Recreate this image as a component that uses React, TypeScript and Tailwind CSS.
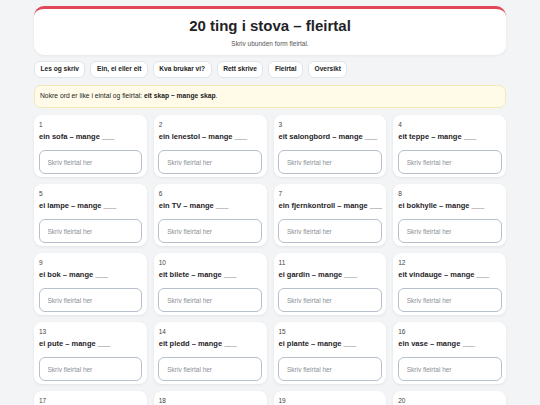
import React from 'react';

const tabs = ['Les og skriv', 'Ein, ei eller eit', 'Kva brukar vi?', 'Rett skrive', 'Fleirtal', 'Oversikt'];

const items = [
  'ein sofa',
  'ein lenestol',
  'eit salongbord',
  'eit teppe',
  'ei lampe',
  'ein TV',
  'ein fjernkontroll',
  'ei bokhylle',
  'ei bok',
  'eit bilete',
  'ei gardin',
  'eit vindauge',
  'ei pute',
  'eit pledd',
  'ei plante',
  'ein vase',
  'eit bord',
  'ein stol',
  'ei klokke',
  'eit speil',
];

export default function App() {
  return (
    <div className="min-h-screen bg-[#f2f4f6] font-['Liberation_Sans',Arial,sans-serif] text-[#1f2328]">
      <div className="mx-auto flex w-[472px] flex-col gap-[6px] pt-[6px] pb-[10px]">
        {/* Header */}
        <div className="rounded-[10px] border-t-[3px] border-[#e04858] bg-white px-4 pt-[8px] pb-[7px] text-center shadow-[0_1px_3px_rgba(0,0,0,0.06)]">
          <h1 className="text-[15px] leading-[18px] font-bold">20 ting i stova – fleirtal</h1>
          <p className="mt-[4px] text-[6.5px] leading-[9px] text-[#555]">Skriv ubunden form fleirtal.</p>
        </div>

        {/* Tabs */}
        <div className="flex gap-[5px]">
          {tabs.map((t) => (
            <button
              key={t}
              className="h-[17px] rounded-[6px] border border-[#dfe5ec] bg-white px-[5.5px] text-[6.6px] leading-none font-bold text-[#222]"
            >
              {t}
            </button>
          ))}
        </div>

        {/* Info */}
        <div className="mt-[1px] flex h-[23px] items-center rounded-[7px] border border-[#f3e8b8] bg-[#fffbe8] px-[5px] text-[6.75px] text-[#222]">
          <span>
            Nokre ord er like i eintal og fleirtal: <strong>eit skap – mange skap</strong>.
          </span>
        </div>

        {/* Cards */}
        <div className="mt-[1px] grid grid-cols-4 gap-[7px]">
          {items.map((word, i) => (
            <div
              key={word}
              className="rounded-[8px] bg-white px-[4.5px] pt-[5px] pb-[3px] shadow-[0_1px_3px_rgba(0,0,0,0.07)]"
            >
              <div className="pl-[0.5px] text-[6.5px] leading-[9px] text-[#444]">{i + 1}</div>
              <div className="mt-[2px] pl-[0.5px] text-[7.5px] leading-[12px] font-bold whitespace-nowrap text-[#1f2328]">
                {word} – mange ___
              </div>
              <input
                placeholder="Skriv fleirtal her"
                className="mt-[7px] h-[24px] w-full rounded-[6px] border border-[#b6bfcb] bg-white px-[8px] text-[6.5px] text-[#222] outline-none placeholder:text-[#8a8f96]"
              />
            </div>
          ))}
        </div>
      </div>
    </div>
  );
}
